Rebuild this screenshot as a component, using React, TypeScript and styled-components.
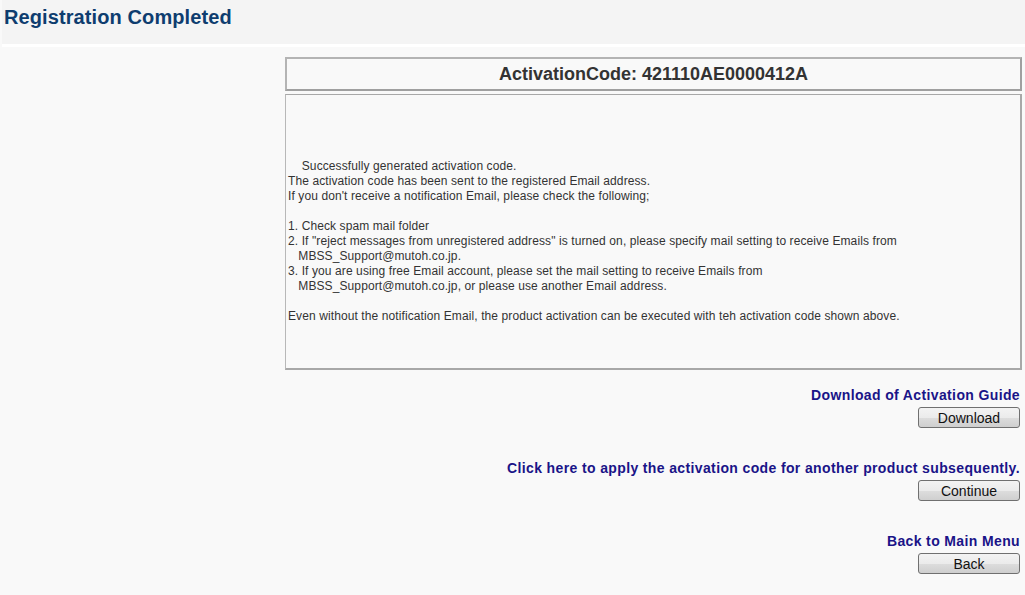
import React from 'react';
import styled, { createGlobalStyle } from 'styled-components';

const GlobalStyle = createGlobalStyle`
  html, body {
    margin: 0;
    padding: 0;
    background: #f9f9f9;
    font-family: "Liberation Sans", Arial, sans-serif;
  }
`;

const messageLines = [
  '    Successfully generated activation code.',
  'The activation code has been sent to the registered Email address.',
  "If you don't receive a notification Email, please check the following;",
  '',
  '1. Check spam mail folder',
  '2. If "reject messages from unregistered address" is turned on, please specify mail setting to receive Emails from',
  '   MBSS_Support@mutoh.co.jp.',
  '3. If you are using free Email account, please set the mail setting to receive Emails from',
  '   MBSS_Support@mutoh.co.jp, or please use another Email address.',
  '',
  'Even without the notification Email, the product activation can be executed with teh activation code shown above.',
];

const actions = [
  { label: 'Download of Activation Guide', button: 'Download' },
  { label: 'Click here to apply the activation code for another product subsequently.', button: 'Continue' },
  { label: 'Back to Main Menu', button: 'Back' },
];

const App = () => {
  return (
    <Page>
      <GlobalStyle />
      <Header>
        <PageTitle>Registration Completed</PageTitle>
      </Header>
      <Main>
        <SideColumn />
        <ContentColumn>
          <CodeBox>ActivationCode: 421110AE0000412A</CodeBox>
          <MessageBox>{messageLines.join('\n')}</MessageBox>
          {actions.map((a) => (
            <ActionBlock key={a.button}>
              <ActionLabel href="#">{a.label}</ActionLabel>
              <ActionButton type="button">{a.button}</ActionButton>
            </ActionBlock>
          ))}
        </ContentColumn>
      </Main>
    </Page>
  );
};

const Page = styled.div`
  width: 1025px;
  min-height: 595px;
  background: #f9f9f9;
`;

const Header = styled.div`
  height: 44px;
  margin: 0 0 0 2px;
  background: #f4f4f4;
  border-bottom: 3px solid #ffffff;
  display: flex;
  align-items: center;
`;

const PageTitle = styled.h1`
  margin: 0 0 10px 2px;
  font-size: 20px;
  font-weight: bold;
  letter-spacing: 0.1px;
  color: #0e3d6f;
`;

const Main = styled.div`
  display: grid;
  grid-template-columns: 285px 737px;
  padding-top: 10px;
`;

const SideColumn = styled.div``;

const ContentColumn = styled.div`
  display: flex;
  flex-direction: column;
  align-items: flex-end;
`;

const CodeBox = styled.div`
  box-sizing: border-box;
  width: 100%;
  height: 34px;
  border: 2px solid #b4b4b4;
  border-right-color: #a0a0a0;
  border-bottom-color: #a0a0a0;
  background: #f9f9f9;
  display: flex;
  align-items: center;
  justify-content: center;
  font-size: 18px;
  font-weight: bold;
  color: #333333;
`;

const MessageBox = styled.div`
  box-sizing: border-box;
  width: 100%;
  height: 276px;
  margin-top: 3px;
  padding: 64px 2px 0 2px;
  border: 1px solid #a8a8a8;
  border-right-width: 2px;
  border-bottom-width: 2px;
  border-left-color: #b8b8b8;
  background: #f9f9f9;
  font-size: 12px;
  line-height: 15px;
  letter-spacing: 0.1px;
  color: #333333;
  white-space: pre-wrap;
`;

const ActionBlock = styled.div`
  display: flex;
  flex-direction: column;
  align-items: flex-end;
  margin-top: 17px;
  padding-right: 2px;

  & + & {
    margin-top: 32px;
  }
`;

const ActionLabel = styled.a`
  font-size: 14px;
  font-weight: bold;
  line-height: 17px;
  letter-spacing: 0.37px;
  color: #1a1488;
  text-decoration: none;
`;

const ActionButton = styled.button`
  box-sizing: border-box;
  width: 102px;
  height: 21px;
  margin-top: 3px;
  padding: 0;
  border: 1px solid #707070;
  border-radius: 3px;
  background: linear-gradient(#f3f3f3, #ebebeb 50%, #dddddd 51%, #cfcfcf);
  font-family: "Liberation Sans", Arial, sans-serif;
  font-size: 14px;
  color: #111111;
  cursor: pointer;
`;

export default App;
